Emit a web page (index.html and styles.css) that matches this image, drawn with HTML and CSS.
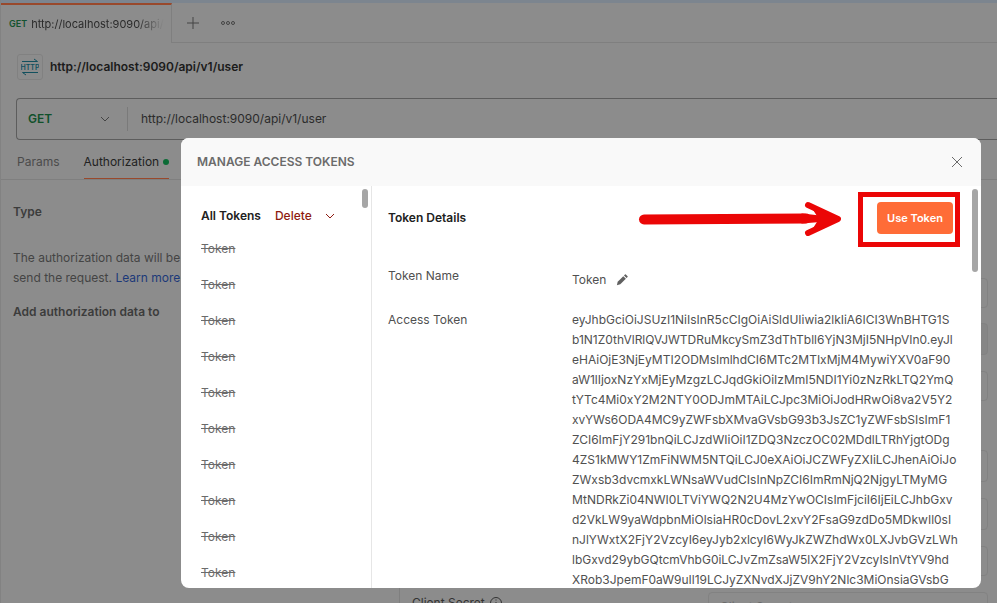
FILE: index.html
```html
<!DOCTYPE html>
<html lang="en">
<head>
<meta charset="utf-8">
<title>Manage Access Tokens</title>
<link rel="stylesheet" href="styles.css">
</head>
<body>
<div class="app">
  <div class="topstrip"></div>
  <nav class="tabs">
    <a class="tab" href="#"><b class="verb">GET</b><span class="tab-name">http://localhost:9090/api/</span></a>
    <div class="tab-tools">
      <button class="icon-btn" aria-label="New tab"><svg width="14" height="14" viewBox="0 0 14 14"><path d="M7 1v12M1 7h12"/></svg></button>
      <button class="icon-btn" aria-label="Tab options"><svg width="16" height="6" viewBox="0 0 16 6"><circle cx="3" cy="3" r="1.5"/><circle cx="8" cy="3" r="1.5"/><circle cx="13" cy="3" r="1.5"/></svg></button>
    </div>
  </nav>
  <header class="title">
    <span class="http-icon"><svg width="18" height="18" viewBox="0 0 18 18"><path d="M1 3.500h15.500M13 1l3.500 2.500M17 14.500H1.500M5 17l-3.500-2.500"/><text x="9" y="12" text-anchor="middle">HTTP</text></svg></span>
    <h1>http://localhost:9090/api/v1/user</h1>
  </header>
  <div class="urlbar">
    <button class="method">GET<svg width="10" height="6" viewBox="0 0 10 6"><path d="M1 1l4 4 4-4"/></svg></button>
    <input class="url" aria-label="Request URL" value="http://localhost:9090/api/v1/user">
  </div>
  <nav class="subtabs"><a href="#">Params</a><a href="#" class="active">Authorization<i class="dot"></i></a></nav>
  <main class="auth">
    <section class="auth-type">
      <h2 class="type">Type</h2>
      <p>The authorization data will be send the request. <a href="#">Learn more</a></p>
      <h2>Add authorization data to</h2>
    </section>
    <section class="auth-form">
      <div class="ghost g1"></div><div class="ghost g2"></div><div class="ghost g3"></div><div class="ghost g4"></div><div class="ghost g5"></div><div class="ghost g6"></div>
      <label class="secret-label" for="secret">Client Secret <svg width="14" height="14" viewBox="0 0 14 14"><circle cx="7" cy="7" r="5.500"/><path d="M7 6v4M7 3.500v1"/></svg></label>
      <input class="secret" id="secret" placeholder="Client Secret">
    </section>
  </main>
</div>
<div class="overlay">
  <div class="modal" role="dialog" aria-label="Manage access tokens">
    <header class="modal-head"><h2>MANAGE ACCESS TOKENS</h2><button class="icon-btn" aria-label="Close"><svg width="12" height="12" viewBox="0 0 12 12"><path d="M1 1l10 10M11 1L1 11"/></svg></button></header>
    <div class="modal-body">
      <aside class="list">
        <div class="list-head"><h3>All Tokens</h3><button class="delete">Delete<svg width="10" height="6" viewBox="0 0 10 6"><path d="M1 1l4 4 4-4"/></svg></button></div>
        <ul>
          <li>Token</li><li>Token</li><li>Token</li><li>Token</li><li>Token</li><li>Token</li><li>Token</li><li>Token</li><li>Token</li><li>Token</li>
        </ul>
        <span class="thumb"></span>
      </aside>
      <section class="details">
        <div class="details-head"><h3>Token Details</h3><button class="use">Use Token</button></div>
        <dl>
          <dt>Token Name</dt>
          <dd class="name">Token<button class="icon-btn edit" aria-label="Edit name"><svg width="12" height="12" viewBox="0 0 14 14"><path d="M1 13l1-4 6.500-6.500 3 3L5 12z"/><path d="M9.300 1.700l1.200-1.200q.5-.5 1 0l2 2q.5.500 0 1l-1.200 1.200z"/></svg></button></dd>
          <dt>Access Token</dt>
          <dd>eyJhbGciOiJSUzI1NiIsInR5cCIgOiAiSldUIiwia2lkIiA6ICI3WnBHTG1S<br>b1N1Z0thVlRlQVJWTDRuMkcySmZ3dThTbll6YjN3MjI5NHpVIn0.eyJl<br>eHAiOjE3NjEyMTI2ODMsImlhdCI6MTc2MTIxMjM4MywiYXV0aF90<br>aW1lIjoxNzYxMjEyMzgzLCJqdGkiOiIzMmI5NDI1Yi0zNzRkLTQ2YmQ<br>tYTc4Mi0xY2M2NTY0ODJmMTAiLCJpc3MiOiJodHRwOi8va2V5Y2<br>xvYWs6ODA4MC9yZWFsbXMvaGVsbG93b3JsZC1yZWFsbSIsImF1<br>ZCI6ImFjY291bnQiLCJzdWIiOiI1ZDQ3NzczOC02MDdlLTRhYjgtODg<br>4ZS1kMWY1ZmFiNWM5NTQiLCJ0eXAiOiJCZWFyZXIiLCJhenAiOiJo<br>ZWxsb3dvcmxkLWNsaWVudCIsInNpZCI6ImRmNjQ2NjgyLTMyMG<br>MtNDRkZi04NWI0LTViYWQ2N2U4MzYwOCIsImFjciI6IjEiLCJhbGxv<br>d2VkLW9yaWdpbnMiOlsiaHR0cDovL2xvY2FsaG9zdDo5MDkwIl0sI<br>nJlYWxtX2FjY2VzcyI6eyJyb2xlcyI6WyJkZWZhdWx0LXJvbGVzLWh<br>lbGxvd29ybGQtcmVhbG0iLCJvZmZsaW5lX2FjY2VzcyIsInVtYV9hd<br>XRob3JpemF0aW9uIl19LCJyZXNvdXJjZV9hY2Nlc3MiOnsiaGVsbG</dd>
        </dl>
        <span class="thumb tall"></span>
        <span class="mark"></span>
        <svg class="arrow" width="204" height="40" viewBox="0 0 204 40"><path d="M6 20.500L168 19.500" stroke-width="10"/><path d="M170 6L200 20L170 34" stroke-width="6"/><path d="M164 16L200 20L164 23z" stroke-width="3"/><path d="M175 9L200 20L175 31L182 20z" stroke-width="2"/></svg>
      </section>
    </div>
  </div>
</div>
</body>
</html>
```
FILE: styles.css
```css
* { box-sizing: border-box; }
body { margin: 0; height: 100vh; overflow: hidden; background: #8c8c8c; color: #2b2b2b; font: 12px/20px Inter, "Liberation Sans", sans-serif; }
h1, h2, h3, p, ul, dl, dd { margin: 0; padding: 0; font-size: 12px; font-weight: 600; }
p, dd { font-weight: 400; }
ul { list-style: none; }
a { color: inherit; text-decoration: none; }
button, input { font: inherit; color: inherit; border: 0; padding: 0; background: none; }
svg { fill: none; stroke: currentColor; flex: none; }
.icon-btn { display: flex; align-items: center; }

.app { height: 100vh; overflow: hidden; display: flex; flex-direction: column; border-left: 1px solid #828282; }
.topstrip { height: 3px; flex: none; background: #7c858f; }
.tabs { display: flex; height: 40px; flex: none; }
.tab { width: 171px; display: flex; align-items: center; border-top: 2px solid #99492c; border-right: 1px solid #7f7f7f; padding: 0 9px 0 8px; font-size: 11px; }
.verb { font-size: 9px; font-weight: 600; color: #14532f; margin-right: 4px; }
.tab-name { white-space: nowrap; mask-image: linear-gradient(90deg, #000 80%, transparent); }
.tab-tools { flex: 1; display: flex; align-items: center; gap: 20px; padding-left: 14px; border-bottom: 1px solid #7f7f7f; color: #444; }
.title { display: flex; align-items: center; gap: 7px; height: 48px; margin: 0 16px; color: #1b1b1b; flex: none; }
.http-icon { width: 26px; height: 26px; border: 1px solid #818181; border-radius: 3px; display: grid; place-items: center; color: #12505e; }
.http-icon text { fill: currentColor; stroke: none; font-size: 7px; font-weight: 600; }
.urlbar { display: flex; align-items: center; flex: none; height: 42px; margin: 7px 0 0 15px; border: 1px solid #5d5d5d; border-right: 0; border-radius: 4px 0 0 4px; }
.method { display: flex; align-items: center; justify-content: space-between; width: 111px; height: 24px; padding: 0 17px 0 11px; border-right: 1px solid #7a7a7a; font-weight: 600; color: #10512b; }
.method svg { color: #444; }
.url { flex: 1; min-width: 0; padding-left: 13px; outline: 0; }
.subtabs { display: flex; gap: 24px; height: 40px; flex: none; padding-left: 16px; border-bottom: 1px solid #7f7f7f; line-height: 44px; color: #4b4b4b; }
.subtabs .active { color: #222; height: 39px; border-bottom: 1px solid #99492c; display: flex; align-items: center; gap: 4px; line-height: 20px; padding-top: 6px; }
.dot { width: 6px; height: 6px; border-radius: 50%; background: #0b6b36; }
.auth { flex: 1; display: flex; min-height: 0; color: #444; }
.auth-type { width: 399px; flex: none; padding: 22px 12px; border-right: 1px solid #7f7f7f; }
.auth-type .type { margin-bottom: 26px; }
.auth-type p { margin-bottom: 14px; width: 176px; }
.auth-type h2 { color: #3c3c3c; }
.auth-type a { color: #1c3979; }
.auth-form { flex: 1; padding: 98px 9px 0 12px; display: grid; grid-template-columns: 296px 1fr; align-content: start; }
.ghost { grid-column: 2; height: 30px; border: 1px solid #828282; border-radius: 4px; }
.g2 { margin-top: 15px; background: #868686; height: 32px; }
.g3 { margin-top: 16px; }
.g4 { margin-top: 49px; height: 32px; }
.g5 { margin-top: 16px; height: 32px; }
.g6 { margin-top: 16px; }
.secret-label { color: #333; margin-top: 17px; display: flex; align-items: center; gap: 4px; height: 20px; }
.secret { margin-top: 16px; height: 28px; width: 100%; border: 1px solid #828282; border-radius: 4px; padding-left: 11px; }
.secret::placeholder { color: #6b6b6b; }

.overlay { position: absolute; inset: 138px 16px 15px 181px; }
.modal { height: 100%; display: flex; flex-direction: column; background: #fff; border-radius: 8px; overflow: hidden; }
.modal-head { display: flex; align-items: center; justify-content: space-between; flex: none; height: 48px; padding: 0 18px 0 16px; background: #f9f9f9; color: #6b6b6b; }
.modal-body { flex: 1; display: flex; min-height: 0; }
.list { width: 191px; flex: none; position: relative; padding: 20px; border-right: 1px solid #e6e6e6; overflow: hidden; }
.list-head { display: flex; gap: 14px; margin-bottom: 13px; color: #212121; }
.delete { display: flex; align-items: center; gap: 13px; color: #8e1a10; font-weight: 500; }
.list li { height: 36px; color: #6b6b6b; font-weight: 400; text-decoration: line-through; }
.details { flex: 1; min-width: 0; position: relative; overflow: hidden; padding: 16px 28px 0 16px; color: #505050; }
.details-head { display: flex; justify-content: space-between; align-items: center; margin-bottom: 32px; color: #212121; }
.use { width: 76px; height: 32px; border-radius: 4px; background: #ff6c37; color: #fff; font-size: 11px; font-weight: 600; }
.details dl { display: grid; grid-template-columns: 184px 1fr; row-gap: 20px; font-weight: 400; }
.details dd { white-space: nowrap; }
.name { display: flex; align-items: center; gap: 10px; padding-top: 4px; }
.edit svg { fill: #606060; stroke: none; }
.thumb { position: absolute; top: 3px; right: 3px; width: 6px; height: 19px; border-radius: 3px; background: #a6a6a6; }
.tall { height: 83px; }
.mark { position: absolute; top: 6px; right: 21px; width: 102px; height: 55px; border: 5px solid #eb0606; }
.arrow { position: absolute; top: 13px; right: 139px; color: #eb0606; stroke-linecap: round; stroke-linejoin: round; }
.arrow path:nth-child(n+3) { fill: #eb0606; }
```
